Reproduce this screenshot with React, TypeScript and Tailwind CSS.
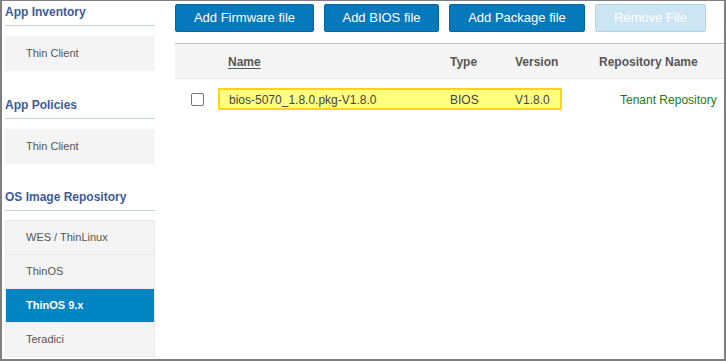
const font = { fontFamily: '"Liberation Sans", Arial, sans-serif' };

function SectionHeading({ title, first }: { title: string; first?: boolean }) {
    return (
        <div
            className={`border-b border-[#c9d1dd] pt-[3px] pb-[5px] text-[12px] leading-[16px] font-bold text-[#3d5a9b] ${
                first ? '' : 'mt-[23px]'
            }`}
        >
            {title}
        </div>
    );
}

function SideItem({ label, active, last }: { label: string; active?: boolean; last?: boolean }) {
    return (
        <div
            className={`flex items-center pl-[20px] text-[11px] ${
                active ? 'bg-[#0085c3] font-bold text-white' : 'bg-[#f4f4f4] text-[#555]'
            } ${last ? 'h-[33px]' : 'h-[34px] border-b border-[#ececec]'}`}
        >
            {label}
        </div>
    );
}

function ActionButton({ label, width, disabled }: { label: string; width: string; disabled?: boolean }) {
    return (
        <div
            className={`flex h-[28px] items-center justify-center rounded-[2px] border text-[13px] text-white ${width} ${
                disabled ? 'border-[#abd5ec] bg-[#cce5f3]' : 'border-[#05679f] bg-[#0679bd]'
            }`}
        >
            {label}
        </div>
    );
}

export default function App() {
    return (
        <div
            style={font}
            className="flex h-[361px] w-[726px] border-t border-r-2 border-b-2 border-l-2 border-[#7f7f7f] bg-white pl-[3px]"
        >
            {/* left navigation */}
            <aside className="flex w-[150px] flex-col">
                <SectionHeading title="App Inventory" first />
                <div className="mt-[10px] flex h-[35px] items-center bg-[#f4f4f4] pl-[21px] text-[11px] text-[#555]">
                    Thin Client
                </div>

                <SectionHeading title="App Policies" />
                <div className="mt-[10px] flex h-[35px] items-center bg-[#f4f4f4] pl-[21px] text-[11px] text-[#555]">
                    Thin Client
                </div>

                <div className="mt-[-1px]">
                    <SectionHeading title="OS Image Repository" />
                </div>
                <div className="mt-[9px] border border-[#e8e8e8]">
                    <SideItem label="WES / ThinLinux" />
                    <SideItem label="ThinOS" />
                    <SideItem label="ThinOS 9.x" active />
                    <SideItem label="Teradici" last />
                </div>
            </aside>

            {/* main content */}
            <main className="ml-[20px] flex flex-1 flex-col pt-[3px]">
                <div className="flex gap-[10px]">
                    <ActionButton label="Add Firmware file" width="w-[139px]" />
                    <ActionButton label="Add BIOS file" width="w-[115px]" />
                    <ActionButton label="Add Package file" width="w-[136px]" />
                    <ActionButton label="Remove File" width="w-[111px]" disabled />
                </div>

                <div className="mt-[11px] border-t border-[#c4c4c4]">
                    <div className="flex h-[35px] items-center border-b border-[#e6e6e6] bg-[#f5f5f5] pt-[1px] text-[12px] font-bold text-[#555]">
                        <div className="w-[43px]" />
                        <div className="w-[232px] pl-[10px]">
                            <span className="underline underline-offset-2">Name</span>
                        </div>
                        <div className="w-[65px]">Type</div>
                        <div className="w-[84px]">Version</div>
                        <div>Repository Name</div>
                    </div>

                    <div className="flex items-center pt-[9px] text-[12px] text-[#444]">
                        <div className="flex w-[43px] items-center justify-center pl-[2px]">
                            <span className="block h-[13px] w-[13px] rounded-[2px] border border-[#767676] bg-white" />
                        </div>
                        <div className="flex h-[22px] w-[344px] items-center border-2 border-[#ffd21f] bg-[#ffff80] pt-[1px]">
                            <div className="w-[230px] pl-[9px]">bios-5070_1.8.0.pkg-V1.8.0</div>
                            <div className="w-[65px]">BIOS</div>
                            <div>V1.8.0</div>
                        </div>
                        <div className="pl-[58px] pt-[1px] text-[#1c7a1c]">Tenant Repository</div>
                    </div>
                </div>
            </main>
        </div>
    );
}
